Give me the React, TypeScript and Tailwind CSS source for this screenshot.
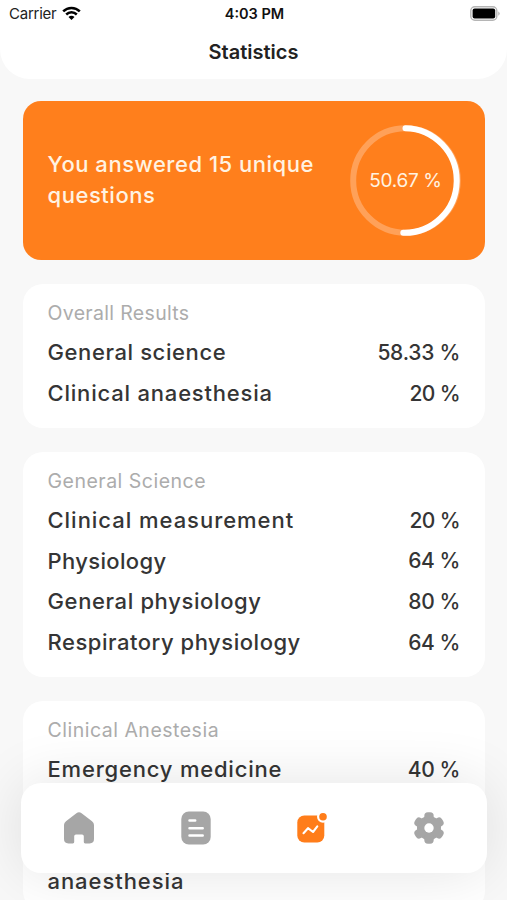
import React from "react";

type Row = { label: string; value: string; track: string; valueTrack: string };

const overall: Row[] = [
  { label: "General science", value: "58.33 %", track: "tracking-[0.6px]", valueTrack: "tracking-[-0.25px]" },
  { label: "Clinical anaesthesia", value: "20 %", track: "tracking-[0.8px]", valueTrack: "tracking-[-0.6px]" },
];

const science: Row[] = [
  { label: "Clinical measurement", value: "20 %", track: "tracking-[0.97px]", valueTrack: "tracking-[-0.6px]" },
  { label: "Physiology", value: "64 %", track: "tracking-[0.35px]", valueTrack: "tracking-[-0.4px]" },
  { label: "General physiology", value: "80 %", track: "tracking-[0.63px]", valueTrack: "tracking-[-0.4px]" },
  { label: "Respiratory physiology", value: "64 %", track: "tracking-[0.53px]", valueTrack: "tracking-[-0.4px]" },
];

const clinical: Row[] = [
  { label: "Emergency medicine", value: "40 %", track: "tracking-[0.8px]", valueTrack: "tracking-[-0.4px]" },
];

function Card({ title, titleTrack, rows, children }: { title: string; titleTrack: string; rows: Row[]; children?: React.ReactNode }) {
  return (
    <section className="rounded-[20px] bg-white pt-[14px] pr-[25px] pb-[13.5px] pl-[24.5px]">
      <h2 className={`mb-[4.5px] h-[30px] text-[19.5px] leading-[30px] font-normal whitespace-nowrap text-[#acacac] ${titleTrack}`}>{title}</h2>
      {rows.map((row) => (
        <div key={row.label} className="flex h-[40.75px] items-center justify-between font-medium whitespace-nowrap text-[#353535]">
          <span className={`text-[22px] ${row.track}`}>{row.label}</span>
          <span className={`text-[21px] ${row.valueTrack}`}>{row.value}</span>
        </div>
      ))}
      {children}
    </section>
  );
}

function Wifi() {
  return (
    <svg width="19" height="15" viewBox="0 0 19 15" fill="none" stroke="#000" strokeWidth="2.5">
      <path d="M1.2 5.4C5.8 .8 13.2 .8 17.8 5.4" />
      <path d="M4.2 8.5C7.2 5.6 11.8 5.6 14.8 8.5" />
      <path d="M9.5 14 6.5 11C8.2 9.4 10.8 9.4 12.5 11Z" fill="#000" stroke="none" />
    </svg>
  );
}

function HomeIcon() {
  return (
    <svg width="32" height="34" viewBox="0 0 32 34" fill="#a6a6a6">
      <path d="M13.4 2.2Q16 .2 18.6 2.2L29 10.2Q31 11.8 31 14V28Q31 32.4 26.6 32.4H22.2Q20.8 32.4 20.8 31V25.2Q20.8 23.4 19 23.4H13Q11.2 23.4 11.2 25.2V31Q11.2 32.4 9.8 32.4H5.4Q1 32.4 1 28V14Q1 11.8 3 10.2Z" />
    </svg>
  );
}

function ListIcon() {
  return (
    <svg width="30" height="34" viewBox="0 0 30 34">
      <rect x=".3" y=".6" width="29.4" height="32.8" rx="7.5" fill="#a6a6a6" />
      <path d="M8.5 9.6H14.2M8.5 17.2H21.7M8.5 24.4H21.7" stroke="#fff" strokeWidth="2.5" strokeLinecap="round" />
    </svg>
  );
}

function ChartIcon() {
  return (
    <svg width="32" height="32" viewBox="0 0 32 32">
      <rect x="1.3" y="3.5" width="27" height="27" rx="7" fill="#ff7d1a" />
      <circle cx="27" cy="4.8" r="6" fill="#fff" />
      <circle cx="27" cy="4.8" r="3.8" fill="#ff7d1a" />
      <path d="M7.5 21.2 12 16.2 17 20 21.3 14.4" fill="none" stroke="#fff" strokeWidth="2.1" strokeLinecap="round" strokeLinejoin="round" />
    </svg>
  );
}

function GearIcon() {
  return (
    <svg width="32" height="34" viewBox="-16 -17 32 34">
      <g fill="#a6a6a6">
        <circle r="12" />
        <rect x="-4.7" y="-15.7" width="9.4" height="31.4" rx="3.6" />
        <rect x="-4.7" y="-15.7" width="9.4" height="31.4" rx="3.6" transform="rotate(60)" />
        <rect x="-4.7" y="-15.7" width="9.4" height="31.4" rx="3.6" transform="rotate(120)" />
      </g>
      <circle r="4.7" fill="#fff" />
    </svg>
  );
}

export default function App() {
  return (
    <div className="relative h-[900px] w-[507px] overflow-hidden bg-[#f8f8f8] font-['Inter',sans-serif]">
      <header className="h-[79px] rounded-b-[30px] bg-white">
        <div className="grid h-[27px] grid-cols-3 items-center pr-[7px] pl-[9px]">
          <div className="flex items-center gap-[6px] text-[15px] text-[#222]">
            <span className="pt-px tracking-[-0.25px]">Carrier</span>
            <Wifi />
          </div>
          <span className="text-center text-[14.5px] font-semibold text-[#111]">4:03 PM</span>
          <div className="flex items-center justify-end">
            <svg width="30" height="15" viewBox="0 0 30 15">
              <rect x=".8" y=".8" width="26" height="13.4" rx="4" fill="#fff" stroke="#b5b5b5" strokeWidth="1.4" />
              <rect x="2.6" y="2.6" width="22.6" height="9.8" rx="2" fill="#000" />
              <path d="M28.3 5.2Q31 7.5 28.3 9.8Z" fill="#b0b0b0" />
            </svg>
          </div>
        </div>
        <h1 className="text-center text-[20px] leading-[51px] font-semibold text-[#222]">Statistics</h1>
      </header>

      <main className="flex flex-col gap-6 pt-[22px] pr-[22px] pl-[23px]">
        <section className="flex h-[159px] items-center justify-between rounded-[18px] bg-[#ff7f1c] pr-6 pl-[24.5px]">
          <p className="pb-px text-[22px] leading-[31px] font-medium whitespace-nowrap text-[#fff3e2]">
            <span className="tracking-[0.52px]">You answered 15 unique</span>
            <br />
            <span className="tracking-[0.55px]">questions</span>
          </p>
          <div className="grid place-items-center">
            <svg className="col-start-1 row-start-1" width="111" height="111" viewBox="0 0 111 111" fill="none" strokeWidth="6">
              <circle cx="55.5" cy="55.5" r="52.3" stroke="#ffa159" />
              <path d="M55.5 3.2A52.3 52.3 0 1 1 53.3 107.8" stroke="#fff" strokeLinecap="round" />
            </svg>
            <span className="col-start-1 row-start-1 pt-[2px] text-[19px] tracking-[-0.3px] text-[#fff3e2]">50.67 %</span>
          </div>
        </section>

        <Card title="Overall Results" titleTrack="tracking-[0.33px]" rows={overall} />
        <Card title="General Science" titleTrack="tracking-[0.5px]" rows={science} />
        <Card title="Clinical Anestesia" titleTrack="tracking-[0.5px]" rows={clinical}>
          <p className="pt-[76.5px] text-[22px] leading-[31px] font-medium tracking-[0.94px] text-[#353535]">anaesthesia</p>
        </Card>
      </main>

      <nav className="absolute top-[783px] left-[21px] grid h-[90px] w-[466px] grid-cols-4 place-items-center rounded-[20px] bg-white shadow-[0_0_60px_rgba(0,0,0,0.11)]">
        <HomeIcon />
        <ListIcon />
        <ChartIcon />
        <GearIcon />
      </nav>
    </div>
  );
}
